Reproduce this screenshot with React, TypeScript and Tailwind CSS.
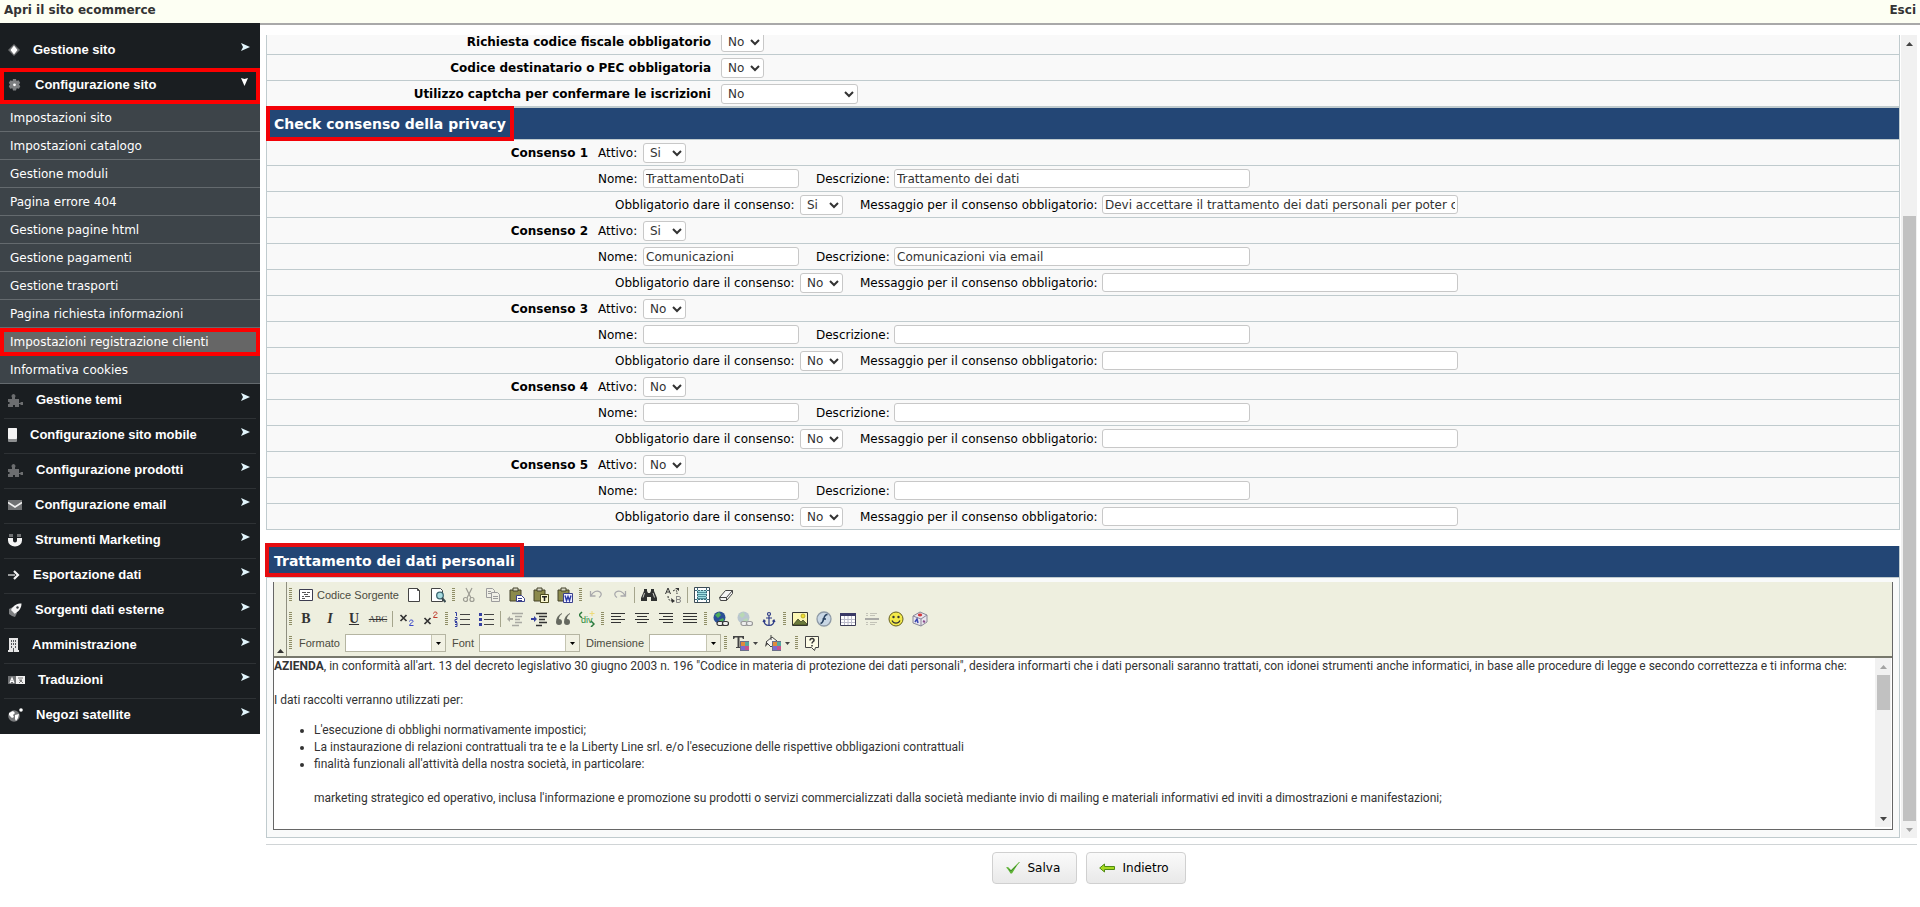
import React from "react";

/* ---------- Sidebar ---------- */

const icons = {
  rhombus: (
    <svg width="12" height="14" viewBox="0 0 12 14">
      <path d="M6 1l6 6-6 6-6-6z" fill="#6b6d6f" />
      <path d="M6 2.500l3.500 4.500L6 11.500 2.500 7z" fill="#fff" />
    </svg>
  ),
  gear: (
    <svg width="13" height="14" viewBox="0 0 13 14">
      <path d="M5 1h3l.5 2 2-.7 1.700 2.400L11 6.500l1.300 1.700-1.400 2.500-2.200-.5L8 12.500H5l-.6-2.300-2.200.5L.8 8.200 2 6.500.8 4.700l1.700-2.400 2 .7z" fill="#7d7f81" />
      <circle cx="6.500" cy="6.800" r="1.400" fill="#fff" />
    </svg>
  ),
  puzzle: (
    <svg width="15" height="14" viewBox="0 0 15 14">
      <path d="M0 6h4V4.500a2 2 0 1 1 3 0V6h4v4h1.500V9H15v3h-2.500v-1H11v3H7v-2H5v2H0v-3h1.500V9H0z" fill="#6c6e70" />
    </svg>
  ),
  phone: (
    <svg width="9" height="14" viewBox="0 0 9 14">
      <rect width="9" height="14" rx="1" fill="#8d8f90" />
      <rect width="9" height="11" rx="1" fill="#f4f4f4" />
    </svg>
  ),
  mail: (
    <svg width="14" height="14" viewBox="0 0 14 14">
      <rect y="2" width="14" height="10" fill="#6f7173" />
      <path d="M0 4.500l7 4.500 7-4.500" fill="none" stroke="#f1f1f1" strokeWidth="1.600" />
    </svg>
  ),
  magnet: (
    <svg width="14" height="14" viewBox="0 0 14 14">
      <path d="M1 1h4v3H1zM9 1h4v3H9z" fill="#6f7173" />
      <path d="M0 5h5v2.500a2 2 0 0 0 4 0V5h5v2.500a7 6 0 0 1-14 0z" fill="#f4f4f4" />
    </svg>
  ),
  arrow: (
    <svg width="12" height="14" viewBox="0 0 12 14">
      <path d="M0 7h7" stroke="#9a9c9d" strokeWidth="2" />
      <path d="M6 3l4 4-4 4" fill="none" stroke="#f4f4f4" strokeWidth="2.200" />
    </svg>
  ),
  rocket: (
    <svg width="14" height="14" viewBox="0 0 14 14">
      <path d="M1 6l4-2 4 6-2 4-3-1-3-2z" fill="#7d7f81" />
      <path d="M13.500.5C9 .5 5.500 2 3 7l3.700 3.700C11 8.500 13.500 5 13.500.5z" fill="#f4f4f4" />
      <circle cx="9.500" cy="4.500" r="1.200" fill="#33373a" />
    </svg>
  ),
  building: (
    <svg width="11" height="14" viewBox="0 0 11 14">
      <path d="M1 0h9v12h1v2H0v-2h1z" fill="#e6e6e6" />
      <path d="M3 2h1v2H3zM5 2h1v2H5zM7 2h1v2H7zM3 5h1v2H3zM5 5h1v2H5zM7 5h1v2H7zM3 8h1v2H3zM7 8h1v2H7zM5 10h1v4H5z" fill="#54585b" />
    </svg>
  ),
  translate: (
    <svg width="17" height="14" viewBox="0 0 17 14">
      <rect y="3" width="8" height="8" fill="#6f7173" />
      <rect x="8" y="3" width="9" height="8" fill="#f1f1f1" />
      <path d="M2 10l2-5 2 5M3 8.500h2" fill="none" stroke="#fff" strokeWidth="1.200" />
      <path d="M10 5h5M11 7h3l-3 3M12 7l3 3" fill="none" stroke="#777" />
    </svg>
  ),
  satellite: (
    <svg width="15" height="14" viewBox="0 0 15 14">
      <circle cx="6" cy="8" r="5.800" fill="#77797b" />
      <path d="M1 5l4-2 2 2-2 2 1 2-2 1-3-3zM7 7l4-1-1 4-2 3-1-2z" fill="#fff" />
      <circle cx="13" cy="2" r="1.800" fill="#fff" />
    </svg>
  ),
};

interface MenuEntry {
  label: string;
  icon: keyof typeof icons;
}

const submenu = [
  "Impostazioni sito",
  "Impostazioni catalogo",
  "Gestione moduli",
  "Pagina errore 404",
  "Gestione pagine html",
  "Gestione pagamenti",
  "Gestione trasporti",
  "Pagina richiesta informazioni",
  "Impostazioni registrazione clienti",
  "Informativa cookies",
];

const lowerMenu: MenuEntry[] = [
  { label: "Gestione temi", icon: "puzzle" },
  { label: "Configurazione sito mobile", icon: "phone" },
  { label: "Configurazione prodotti", icon: "puzzle" },
  { label: "Configurazione email", icon: "mail" },
  { label: "Strumenti Marketing", icon: "magnet" },
  { label: "Esportazione dati", icon: "arrow" },
  { label: "Sorgenti dati esterne", icon: "rocket" },
  { label: "Amministrazione", icon: "building" },
  { label: "Traduzioni", icon: "translate" },
  { label: "Negozi satellite", icon: "satellite" },
];

function MenuItem({ label, icon }: MenuEntry) {
  return (
    <li className="mx-1 border-b border-[#2e3235] last:border-b-0">
      <a href="#" className="flex h-[34px] items-center pb-[2px] pl-1 pr-[6px] font-['Liberation_Sans',Arial,sans-serif] text-[13px] font-bold text-white">
        {icons[icon]}
        <span className="ml-[13px] flex-1">{label}</span>
        <svg width="9" height="8" viewBox="0 0 9 8" className="mb-[6px]">
          <path d="M0 0l9 4-9 4 2-4z" fill="#e2f5fc" />
        </svg>
      </a>
    </li>
  );
}

function Sidebar() {
  return (
    <nav className="w-[260px] shrink-0 bg-[#1a1e21] pb-px">
      <ul className="pt-[11px]">
        <MenuItem label="Gestione sito" icon="rhombus" />
      </ul>
      <a href="#" className="flex h-9 items-center border-4 border-[#fd0000] pb-[2px] pl-1 pr-2 font-['Liberation_Sans',Arial,sans-serif] text-[13px] font-bold text-white">
        {icons.gear}
        <span className="ml-[14px] flex-1">Configurazione sito</span>
        <svg width="7" height="8" viewBox="0 0 7 8" className="mb-[6px]">
          <path d="M0 0l3.500 1L7 0 3.500 8z" fill="#fff" />
        </svg>
      </a>
      <ul>
        {submenu.map((label) => {
          const active = label === "Impostazioni registrazione clienti";
          return (
            <li key={label}>
              <a
                href="#"
                className={
                  active
                    ? "flex h-7 items-center border-4 border-[#fd0000] bg-[#666] pl-[6px] text-xs text-white"
                    : "flex h-7 items-center border-b border-[#646a6e] bg-[#3d4449] pl-[10px] text-xs text-white"
                }
              >
                {label}
              </a>
            </li>
          );
        })}
      </ul>
      <ul>
        {lowerMenu.map((m) => (
          <MenuItem key={m.label} {...m} />
        ))}
      </ul>
    </nav>
  );
}

/* ---------- Form ---------- */

const selectCls = "h-5 rounded-[3px] border border-[#c8c8c8] bg-white px-[2px] text-xs text-[#333]";
const inputCls = "h-[19px] rounded-[3px] border border-[#c8c8c8] bg-white px-[2px] text-xs text-[#333]";

function YesNo({ id, value }: { id: string; value: string }) {
  return (
    <select id={id} defaultValue={value} className={`${selectCls} w-[43px]`}>
      <option>Si</option>
      <option>No</option>
    </select>
  );
}

interface Consent {
  n: number;
  active: string;
  name: string;
  desc: string;
  required: string;
  message: string;
}

const consents: Consent[] = [
  { n: 1, active: "Si", name: "TrattamentoDati", desc: "Trattamento dei dati", required: "Si", message: "Devi accettare il trattamento dei dati personali per poter continuare" },
  { n: 2, active: "Si", name: "Comunicazioni", desc: "Comunicazioni via email", required: "No", message: "" },
  { n: 3, active: "No", name: "", desc: "", required: "No", message: "" },
  { n: 4, active: "No", name: "", desc: "", required: "No", message: "" },
  { n: 5, active: "No", name: "", desc: "", required: "No", message: "" },
];

const rowCls = "flex h-[26px] items-center border-b border-[#c0cbce]";

function ConsentRows({ n, active, name, desc, required, message }: Consent) {
  return (
    <>
      <div className={rowCls}>
        <span className="mr-[10px] w-[321px] text-right font-bold">Consenso {n}</span>
        <label htmlFor={`attivo${n}`} className="w-[45px]">Attivo:</label>
        <YesNo id={`attivo${n}`} value={active} />
      </div>
      <div className={`${rowCls} pl-[331px]`}>
        <label htmlFor={`nome${n}`} className="w-[45px]">Nome:</label>
        <input id={`nome${n}`} defaultValue={name} className={`${inputCls} w-[156px]`} />
        <label htmlFor={`descr${n}`} className="ml-[17px] w-[78px]">Descrizione:</label>
        <input id={`descr${n}`} defaultValue={desc} className={`${inputCls} w-[356px]`} />
      </div>
      <div className={`${rowCls} pl-[348px]`}>
        <label htmlFor={`obbl${n}`} className="w-[185px] whitespace-nowrap">Obbligatorio dare il consenso:</label>
        <YesNo id={`obbl${n}`} value={required} />
        <label htmlFor={`msg${n}`} className="ml-[17px] w-[242px] whitespace-nowrap">Messaggio per il consenso obbligatorio:</label>
        <input id={`msg${n}`} defaultValue={message} className={`${inputCls} w-[356px]`} />
      </div>
    </>
  );
}

/* ---------- Editor toolbar ---------- */

const clipboard = (
  <>
    <path d="M1 3h11v11H1z" fill="#8b8a4c" stroke="#45432a" />
    <path d="M4 1h5v3H4z" fill="#d9d9c8" stroke="#45432a" />
  </>
);

const palette = (
  <>
    <path d="M7 6h9v10H7z" fill="#6b6f8a" />
    <path d="M8 7h4v4H8z" fill="#e08a3c" />
    <path d="M12 7h4v4h-4z" fill="#56a8a0" />
    <path d="M8 11h4v4H8z" fill="#7b6bd0" />
    <path d="M12 11h4v4h-4z" fill="#c4538e" />
  </>
);

const tools: Record<string, React.ReactNode> = {
  source: (
    <>
      <path d="M1.500 2.500h13v11h-13z" fill="#fff" stroke="#3c3c50" />
      <path d="M4 5.500h4M9 5.500h3M6 7.500h4M4 9.500h2M7 9.500h5M4 11.500h3" stroke="#555" />
    </>
  ),
  page: <path d="M2.500 1.500h9l2 2v11h-11z M11.500 1.500v2h2" fill="#fff" stroke="#444" />,
  preview: (
    <>
      <path d="M1.500 1.500h9l2 2v11h-11z" fill="#fff" stroke="#444" />
      <circle cx="10" cy="8.500" r="3.300" fill="#a8dce0" stroke="#3b6670" strokeWidth="1.300" />
      <path d="M12 11l3.500 4" stroke="#3b4b50" strokeWidth="2.200" />
    </>
  ),
  cut: (
    <g fill="none" stroke="#9c9c93" strokeWidth="1.200">
      <path d="M5 1l5 10M11 1L6 11" />
      <circle cx="4.500" cy="12.500" r="2" />
      <circle cx="11" cy="12.500" r="2" />
    </g>
  ),
  copy: (
    <g fill="#f0f0e6" stroke="#9c9c9c">
      <path d="M1.500 1.500h6l2 2v7h-8z" />
      <path d="M6.500 5.500h6l2 2v7h-8z" />
      <path d="M3 4.500h3M3 6.500h3M8 9.500h5M8 11.500h5" />
    </g>
  ),
  paste: (
    <>
      {clipboard}
      <path d="M7.500 8.500h5l3 3v3h-8z" fill="#fff" stroke="#39408c" />
      <path d="M9 11.500h4M9 13.500h4" stroke="#39408c" />
    </>
  ),
  pasteText: (
    <>
      {clipboard}
      <path d="M7.500 7.500h8v8h-8z" fill="#fbf8cf" stroke="#4b4a20" />
      <path d="M9 9.800h5M11.500 10v4" stroke="#222" strokeWidth="1.500" />
    </>
  ),
  pasteWord: (
    <>
      {clipboard}
      <path d="M6.500 6.500h9v9h-9z" fill="#eef" stroke="#39408c" />
      <path d="M8 8.500l1.500 5 1.500-4 1.500 4 1.500-5" fill="none" stroke="#2b3aa8" strokeWidth="1.400" />
    </>
  ),
  undo: <path d="M2.500 4v5h5M3 8.500c2-4 6-5.500 9-3.500 2 1.500 1.500 4-1 5.500" fill="none" stroke="#a9a9ac" strokeWidth="1.300" />,
  redo: <path d="M13.500 4v5h-5M13 8.500c-2-4-6-5.500-9-3.500-2 1.500-1.500 4 1 5.500" fill="none" stroke="#a9a9ac" strokeWidth="1.300" />,
  find: (
    <>
      <path d="M3 2h3v2l1 2h2l1-2V2h3v2l3 7v3h-6v-4H6v4H0v-3l3-7z" fill="#2f3130" />
      <path d="M3.500 6L2 10.500M12 6l1.500 4.500" stroke="#c9cbc4" />
    </>
  ),
  replace: (
    <>
      <path d="M0.500 7l2.500-6 2.500 6M1.500 5h3" fill="none" stroke="#333" />
      <path d="M11.500 9v6.500h2.500a1.500 1.500 0 0 0 0-3h-2.500M14 12.500a1.500 1.500 0 0 0 0-3h-2.500" fill="none" stroke="#888" />
      <path d="M8 4c3-2 4-1 4 3M3 9c0 4 2 5 5 5" fill="none" stroke="#333" strokeDasharray="2 1" />
      <path d="M10 1h4v3zM6 11l4 3-3 2z" fill="#333" />
    </>
  ),
  selectAll: (
    <>
      <path d="M.5.5h15v15H.5z" fill="#fff" stroke="#3c4b55" />
      <path d="M3 3h10v10H3z" fill="#9edde0" />
      <path d="M4 5.500h8M4 7.500h8M4 9.500h8M4 11.500h8" stroke="#2d7080" strokeWidth=".7" />
      <path d="M3.500 1v14M12.500 1v14M1 3.500h14M1 12.500h14" stroke="#3f6a78" strokeDasharray="2 1" />
    </>
  ),
  eraser: (
    <>
      <path d="M1.500 10.500l6-7h7v3l-6 7h-6z" fill="#f5f5f5" stroke="#444" />
      <path d="M1.500 10.500h7l6-7M8.500 10.500v3" fill="none" stroke="#444" />
    </>
  ),
  sub: (
    <>
      <path d="M1.500 4l6 6M7.500 4l-6 6" stroke="#333" strokeWidth="1.700" />
      <path d="M10.500 10.500c0-2 4-2 3.500 0 0 1-3.500 2-3.500 4h4" fill="none" stroke="#3a48c8" />
    </>
  ),
  sup: (
    <>
      <path d="M1.500 7l6 6M7.500 7l-6 6" stroke="#333" strokeWidth="1.700" />
      <path d="M10.500 2.500c0-2 4-2 3.500 0 0 1-3.500 2-3.500 4h4" fill="none" stroke="#c0392b" />
    </>
  ),
  ol: (
    <>
      <path d="M6 3.500h10M6 8.500h10M6 13.500h10" stroke="#444" />
      <path d="M1 1.500h1.500V5M1 6.500h2v2H1v2h2M1 11.500h2v4H1M1 13.500h2" fill="none" stroke="#3540a0" />
    </>
  ),
  ul: (
    <>
      <path d="M6 3.500h10M6 8.500h10M6 13.500h10" stroke="#444" />
      <path d="M1 2h3v3H1zM1 7h3v3H1zM1 12h3v3H1z" fill="#3540a0" />
    </>
  ),
  outdent: (
    <>
      <path d="M5 2.500h11M8 5.500h7M8 8.500h5M8 11.500h7M5 14.500h7" stroke="#a9a9a2" strokeWidth="1.400" />
      <path d="M0 8l3-3v2h3v2H3v2z" fill="#a9a9a2" />
    </>
  ),
  indent: (
    <>
      <path d="M5 2.500h11M8 5.500h8M8 8.500h6M8 11.500h8M5 14.500h6" stroke="#333" strokeWidth="1.400" />
      <path d="M6 8L3 5v2H0v2h3v2z" fill="#3540a0" />
    </>
  ),
  quote: <path d="M7 2C3 4 1 7 1 11a3 3 0 1 0 3-3c0-2 1-4 3-5zM15 2c-4 2-6 5-6 9a3 3 0 1 0 3-3c0-2 1-4 3-5z" fill="#666960" />,
  div: (
    <>
      <path d="M3 1L0 4l3 3M12 10l3 3-3 3" fill="none" stroke="#2b7a3c" strokeWidth="1.500" />
      <text x="2" y="12" fontSize="9" fill="#2b8a3c" fontFamily="Liberation Sans">div</text>
      <path d="M13 0v5M10.500 2.500h5" stroke="#eedb7a" />
    </>
  ),
  left: <path d="M1 2.500h14M1 5.500h10M1 8.500h14M1 11.500h10" stroke="#333" />,
  center: <path d="M1 2.500h14M3 5.500h10M1 8.500h14M3 11.500h10" stroke="#333" />,
  right: <path d="M1 2.500h14M5 5.500h10M1 8.500h14M5 11.500h10" stroke="#333" />,
  justify: <path d="M1 2.500h14M1 5.500h14M1 8.500h14M1 11.500h14" stroke="#333" />,
  link: (
    <>
      <circle cx="6.500" cy="6.500" r="6" fill="#2a4f96" />
      <path d="M2 4l4-3 2 3-3 3zM6 9l4-2 1 2-3 3z" fill="#4cab59" />
      <rect x="4" y="10.500" width="6" height="4" rx="2" fill="#eee" stroke="#333" strokeWidth="1.200" />
      <rect x="9.500" y="10.500" width="6" height="4" rx="2" fill="#eee" stroke="#333" strokeWidth="1.200" />
    </>
  ),
  unlink: (
    <>
      <circle cx="6.500" cy="6.500" r="6" fill="#b9c6cf" />
      <path d="M2 4l4-3 2 3-3 3zM6 9l4-2 1 2-3 3z" fill="#b8d8b4" />
      <rect x="4" y="10.500" width="6" height="4" rx="2" fill="#eee" stroke="#999" strokeWidth="1.200" />
      <rect x="9.500" y="10.500" width="6" height="4" rx="2" fill="#eee" stroke="#999" strokeWidth="1.200" />
    </>
  ),
  anchor: (
    <g fill="none" stroke="#2c3a86" strokeWidth="1.200">
      <circle cx="8" cy="3" r="1.500" />
      <path d="M8 5v10M5 7h6M3 9c0 4 2.500 5.500 5 5.500s5-1.500 5-5.500M2 11l1-2 1.500 1.500M14 11l-1-2-1.500 1.500" />
    </g>
  ),
  image: (
    <>
      <path d="M.5 1.500h15v13H.5z" fill="#fbf6b4" stroke="#333" />
      <circle cx="11" cy="5" r="2" fill="#f0e02c" stroke="#9a8a1a" strokeWidth=".6" />
      <path d="M1 14l5-6 3 3 2-2 4 4v1z" fill="#6b7a3a" stroke="#33391e" strokeWidth=".7" />
    </>
  ),
  flash: (
    <>
      <circle cx="8" cy="8" r="7" fill="#c9d7e4" stroke="#8e9aa6" strokeWidth="1.300" />
      <path d="M11.500 3.500c-3 0-3.500 3-4 5s-1 3.500-3 4M6.500 8h3.500" fill="none" stroke="#27405f" strokeWidth="1.500" />
    </>
  ),
  table: (
    <>
      <path d="M.5 2.500h15v12H.5z" fill="#fff" stroke="#3a3a55" />
      <path d="M0 2h16v3H0z" fill="#3a3a66" />
      <path d="M1 8.500h14M1 11.500h14M4.500 5v9M8 5v9M11.500 5v9" stroke="#bcbccb" />
    </>
  ),
  hr: (
    <>
      <path d="M1 8h14" stroke="#999" strokeWidth="1.600" />
      <path d="M2 2.500h2M6 2.500h7M2 4.500h2M6 4.500h5M2 11.500h2M6 11.500h7M2 13.500h2M6 13.500h5" stroke="#c3c3b8" />
    </>
  ),
  smiley: (
    <>
      <circle cx="8" cy="8" r="7" fill="#f3ea4a" stroke="#66601f" />
      <circle cx="5.500" cy="6" r="1.200" fill="#333" />
      <circle cx="10.500" cy="6" r="1.200" fill="#333" />
      <path d="M4 9.500c1.500 3.500 6.500 3.500 8 0" fill="none" stroke="#333" strokeWidth="1.200" />
    </>
  ),
  special: (
    <>
      <path d="M1 5l7-4 7 3v7l-6 4-8-3z" fill="#e9e6ee" stroke="#8a8798" />
      <path d="M1 5l8 3 6-4M9 8v7" fill="none" stroke="#8a8798" />
      <ellipse cx="8" cy="4" rx="2.200" ry="1.400" fill="#d2383b" />
      <path d="M3 11l2-3 1 4" fill="none" stroke="#3a48b0" strokeWidth="1.500" />
      <path d="M11 10l2 1" stroke="#8a4a8a" strokeWidth="2" />
    </>
  ),
  textColor: (
    <>
      <path d="M0 1h11v3h-1l-1-1.500H6.500V12H8v1H3v-1h1.500V2.500H2L1 4H0z" fill="#444" />
      {palette}
    </>
  ),
  bgColor: (
    <>
      <path d="M1 7l6-5 5 4-6 6z" fill="#f5f5f0" stroke="#444" />
      <path d="M6 0v5" stroke="#444" />
      <path d="M1 7l-1 5 3-3z" fill="#444" />
      {palette}
    </>
  ),
  help: (
    <>
      <path d="M1.500 1.500h13v11h-3l-1 3-3-3h-6z" fill="#fdfce6" stroke="#444" />
      <path d="M6 5.500c0-3 4.500-2.500 4 0-.2 1-2 1.300-2 3M8 10v1.500" fill="none" stroke="#333" strokeWidth="1.500" />
    </>
  ),
};

function Tool({ name, title }: { name: string; title: string }) {
  return (
    <button type="button" aria-label={title} className="flex h-6 w-6 items-center justify-center">
      <svg width="16" height="16" viewBox="0 0 16 16">{tools[name]}</svg>
    </button>
  );
}

function Handle() {
  return (
    <svg width="7" height="16" viewBox="0 0 7 16" shapeRendering="crispEdges" className="shrink-0">
      <path d="M2 1.500h3M2 3.500h3M2 5.500h3M2 7.500h3M2 9.500h3M2 11.500h3M2 13.500h3" stroke="#8f8e66" />
    </svg>
  );
}

function Separator() {
  return <span className="mx-[2px] h-4 w-px shrink-0 bg-[#a5a58c]" />;
}

function Combo({ id, label, size }: { id: string; label: string; size: "wide" | "narrow" }) {
  return (
    <>
      <label htmlFor={id} className="ml-[5px]">{label}</label>
      <span className={size === "wide" ? "ml-[5px] mr-px flex h-[18px] w-[101px] border border-[#b5b5a2] bg-white" : "ml-[5px] mr-px flex h-[18px] w-[72px] border border-[#b5b5a2] bg-white"}>
        <input id={id} className="min-w-0 flex-1" />
        <span className="flex w-[14px] items-center justify-center border-l border-[#c5c5b2] bg-[#f1f1e3]">
          <svg width="5" height="3" viewBox="0 0 5 3"><path d="M0 0h5L2.500 3z" fill="#000" /></svg>
        </span>
      </span>
    </>
  );
}

function ColorTool({ name, title }: { name: string; title: string }) {
  return (
    <button type="button" aria-label={title} className="flex h-6 w-8 items-center gap-1 pl-1">
      <svg width="16" height="16" viewBox="0 0 16 16" className="shrink-0">{tools[name]}</svg>
      <svg width="5" height="3" viewBox="0 0 5 3" className="shrink-0"><path d="M0 0h5L2.500 3z" fill="#444" /></svg>
    </button>
  );
}

function Toolbar() {
  return (
    <div className="flex border-b-2 border-[#77786c] bg-[#eeefdf] font-['Liberation_Sans',Arial,sans-serif] text-[11px] text-[#4b4b40]">
      <button type="button" aria-label="Riduci barra" className="flex w-[13px] items-end justify-center border-r border-[#8f8f80] pb-[3px]">
        <svg width="7" height="4" viewBox="0 0 7 4"><path d="M0 4h7L3.500 0z" fill="#333" /></svg>
      </button>
      <div className="flex-1 py-px">
        <div className="flex h-6 items-center">
          <Handle />
          <button type="button" className="flex h-6 w-[108px] items-center gap-[3px] pl-1">
            <svg width="16" height="16" viewBox="0 0 16 16">{tools.source}</svg>
            Codice Sorgente
          </button>
          <Tool name="page" title="Nuova pagina" />
          <Tool name="preview" title="Anteprima" />
          <Handle />
          <Tool name="cut" title="Taglia" />
          <Tool name="copy" title="Copia" />
          <Tool name="paste" title="Incolla" />
          <Tool name="pasteText" title="Incolla come testo" />
          <Tool name="pasteWord" title="Incolla da Word" />
          <Handle />
          <Tool name="undo" title="Annulla" />
          <Tool name="redo" title="Ripristina" />
          <Separator />
          <Tool name="find" title="Trova" />
          <Tool name="replace" title="Sostituisci" />
          <Separator />
          <Tool name="selectAll" title="Seleziona tutto" />
          <Tool name="eraser" title="Elimina formattazione" />
        </div>
        <div className="flex h-6 items-center text-[#333]">
          <Handle />
          <button type="button" className="h-6 w-6 font-['Liberation_Serif',serif] text-sm font-bold">B</button>
          <button type="button" className="h-6 w-6 font-['Liberation_Serif',serif] text-sm font-bold italic">I</button>
          <button type="button" className="h-6 w-6 font-['Liberation_Serif',serif] text-sm font-bold underline">U</button>
          <button type="button" className="h-6 w-6 text-center font-['Liberation_Serif',serif] text-[9px] line-through">ABC</button>
          <Separator />
          <Tool name="sub" title="Pedice" />
          <Tool name="sup" title="Apice" />
          <Handle />
          <Tool name="ol" title="Elenco numerato" />
          <Tool name="ul" title="Elenco puntato" />
          <Separator />
          <Tool name="outdent" title="Riduci rientro" />
          <Tool name="indent" title="Aumenta rientro" />
          <Tool name="quote" title="Citazione" />
          <Tool name="div" title="Crea DIV" />
          <Handle />
          <Tool name="left" title="Allinea a sinistra" />
          <Tool name="center" title="Centra" />
          <Tool name="right" title="Allinea a destra" />
          <Tool name="justify" title="Giustifica" />
          <Handle />
          <Tool name="link" title="Collegamento" />
          <Tool name="unlink" title="Elimina collegamento" />
          <Tool name="anchor" title="Ancora" />
          <Handle />
          <Tool name="image" title="Immagine" />
          <Tool name="flash" title="Oggetto Flash" />
          <Tool name="table" title="Tabella" />
          <Tool name="hr" title="Riga orizzontale" />
          <Tool name="smiley" title="Emoticon" />
          <Tool name="special" title="Carattere speciale" />
        </div>
        <div className="flex h-6 items-center">
          <Handle />
          <Combo id="formato" label="Formato" size="wide" />
          <Combo id="font" label="Font" size="wide" />
          <Combo id="dimensione" label="Dimensione" size="narrow" />
          <Handle />
          <ColorTool name="textColor" title="Colore testo" />
          <ColorTool name="bgColor" title="Colore sfondo" />
          <Handle />
          <Tool name="help" title="Informazioni" />
        </div>
      </div>
    </div>
  );
}

/* ---------- Editor ---------- */

function Caret({ up, color }: { up?: boolean; color: string }) {
  return (
    <svg width="7" height="4" viewBox="0 0 7 4">
      <path d={up ? "M0 4h7L3.500 0z" : "M0 0h7L3.500 4z"} fill={color} />
    </svg>
  );
}

function Editor() {
  return (
    <div className="border border-t-0 border-[#666]">
      <Toolbar />
      <div className="flex h-[171px] bg-white">
        <div className="min-w-0 flex-1 overflow-hidden font-[Roboto,sans-serif] text-xs leading-[17px] text-[#333]">
          <p className="whitespace-nowrap">
            <b>AZIENDA</b>, in conformità all'art. 13 del decreto legislativo 30 giugno 2003 n. 196 "Codice in materia di protezione dei dati personali", desidera informarti che i dati personali saranno trattati, con idonei strumenti anche informatici, in base alle procedure di legge e secondo correttezza e ti informa che:
          </p>
          <p className="mt-[17px]">I dati raccolti verranno utilizzati per:</p>
          <ul className="mt-[13px] list-disc pl-10">
            <li>L'esecuzione di obblighi normativamente impostici;</li>
            <li>La instaurazione di relazioni contrattuali tra te e la Liberty Line srl. e/o l'esecuzione delle rispettive obbligazioni contrattuali</li>
            <li>
              finalità funzionali all'attività della nostra società, in particolare:
              <p className="mt-[17px]">marketing strategico ed operativo, inclusa l'informazione e promozione su prodotti o servizi commercializzati dalla società mediante invio di mailing e materiali informativi ed inviti a dimostrazioni e manifestazioni;</p>
            </li>
          </ul>
        </div>
        <div className="mb-[2px] mr-px flex w-4 flex-col items-center bg-[#f1f1f1]">
          <span className="flex h-[17px] items-center"><Caret up color="#a3a3a3" /></span>
          <span className="h-[35px] w-[13px] bg-[#c1c1c1]" />
          <span className="mt-auto flex h-[17px] items-center"><Caret color="#444" /></span>
        </div>
      </div>
    </div>
  );
}

export default function App() {
  return (
    <div className="bg-white font-[Verdana,'DejaVu_Sans',sans-serif] text-xs text-black">
      <header className="flex h-[25px] justify-between border-b-2 border-[#a9a9a9] bg-[#fdfff3] px-1 pt-[2px] font-bold text-[#333]">
        <a href="#">Apri il sito ecommerce</a>
        <a href="#">Esci</a>
      </header>
      <div className="flex items-start">
        <div className="-mt-[2px] shrink-0">
          <Sidebar />
        </div>
        <main className="ml-[6px] mr-[3px] min-w-0 flex-1 pt-[10px]">
          <div className="flex">
            <form className="min-w-0 flex-1">
              <section className="border-x border-[#c0cbce] bg-[#f9f9f9]">
                <div className="flex h-5 items-end overflow-hidden border-b border-[#c0cbce] pb-[2px]">
                  <label htmlFor="cf" className="mr-[10px] w-[444px] pb-[2px] text-right font-bold">Richiesta codice fiscale obbligatorio</label>
                  <YesNo id="cf" value="No" />
                </div>
                <div className={rowCls}>
                  <label htmlFor="pec" className="mr-[10px] w-[444px] text-right font-bold">Codice destinatario o PEC obbligatoria</label>
                  <YesNo id="pec" value="No" />
                </div>
                <div className={rowCls}>
                  <label htmlFor="captcha" className="mr-[10px] w-[444px] text-right font-bold">Utilizzo captcha per confermare le iscrizioni</label>
                  <select id="captcha" className={`${selectCls} w-[137px]`}>
                    <option>No</option>
                  </select>
                </div>
              </section>
              <div className="flex h-[33px] items-center border-y border-r border-[#c0cbce] bg-[#234675]">
                <h2 className="relative flex h-[35px] shrink-0 items-center border-4 border-[#f30208] px-1 text-sm font-bold text-white">Check consenso della privacy</h2>
              </div>
              <section className="border-x border-[#c0cbce] bg-[#f9f9f9]">
                {consents.map((c) => (
                  <ConsentRows key={c.n} {...c} />
                ))}
              </section>
              <div className="mt-4 flex h-8 items-end border-b border-r border-[#c0cbce] bg-[#234675]">
                <h2 className="relative -ml-px flex h-[34px] shrink-0 items-center border-4 border-[#e60c10] px-[5px] pt-[2px] text-sm font-bold text-white">Trattamento dei dati personali</h2>
              </div>
              <section className="border-x border-b border-[#c0cbce] bg-[#f9fafa] px-[6px] pb-[7px] pt-1">
                <Editor />
              </section>
            </form>
            <div className="ml-px flex w-4 flex-col items-center bg-[#f1f1f1]">
              <span className="flex h-[17px] items-center"><Caret up color="#444" /></span>
              <span className="flex-[164]" />
              <span className="w-[13px] flex-[605] bg-[#c1c1c1]" />
              <span className="flex h-[17px] items-center"><Caret color="#a3a3a3" /></span>
            </div>
          </div>
          <div className="mt-[6px] flex justify-center gap-[9px] border-t border-[#d0d4d6] pr-[6px] pt-[7px]">
            <button type="button" className="flex h-8 w-[85px] items-center gap-2 rounded border border-[#d0d0d0] bg-linear-to-b from-[#fafafa] to-[#e9e9e9] pl-[13px]">
              <svg width="14" height="14" viewBox="0 0 14 14">
                <path d="M0 6.500l2-.5 3 3 8-8h1C10.500 5 8 9 6 12.500H4.500C3 10 2 8 0 6.500z" fill="#5fb336" />
                <path d="M3 8.500l2 1.500 5-5" fill="none" stroke="#3f8f28" />
              </svg>
              Salva
            </button>
            <button type="button" className="flex h-8 w-[100px] items-center gap-2 rounded border border-[#d0d0d0] bg-linear-to-b from-[#fafafa] to-[#e9e9e9] pl-3">
              <svg width="16" height="10" viewBox="0 0 16 10">
                <path d="M.7 5l4.800-4v2.500h10v3h-10V9z" fill="#a5d91f" stroke="#4f8a14" />
              </svg>
              Indietro
            </button>
          </div>
        </main>
      </div>
    </div>
  );
}
